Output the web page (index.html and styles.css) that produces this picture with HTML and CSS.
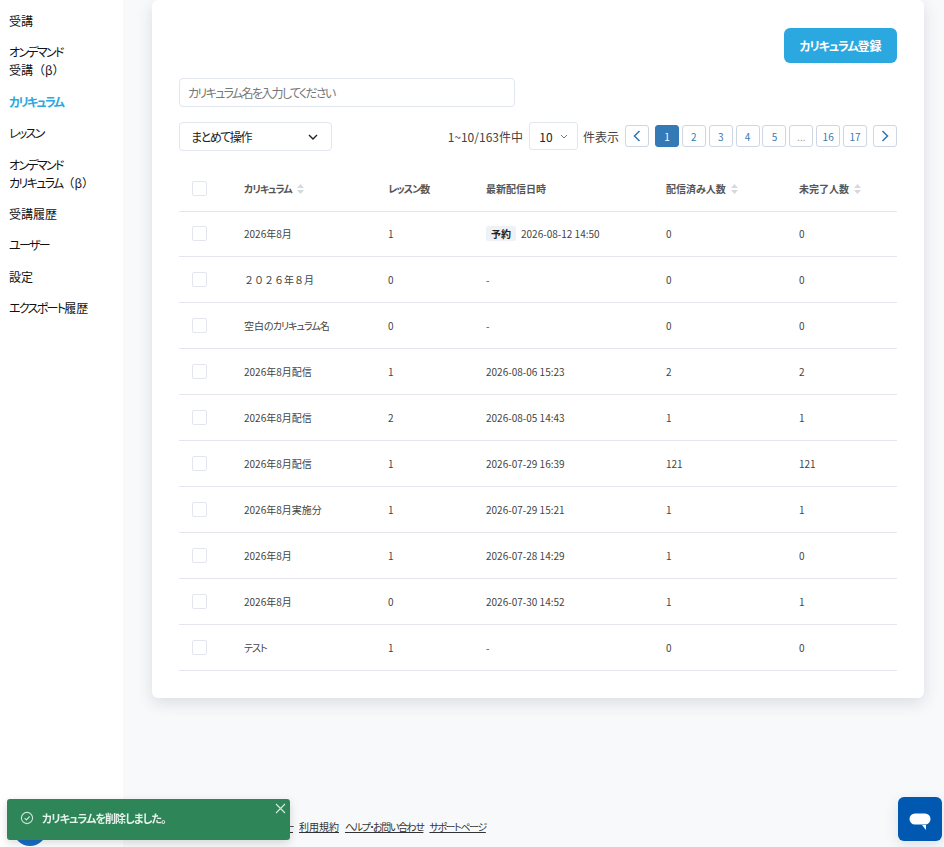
FILE: index.html
```html
<!DOCTYPE html>
<html lang="ja">
<head>
<meta charset="utf-8">
<title>カリキュラム</title>
<link rel="stylesheet" href="styles.css">
</head>
<body>
<div class="app">
  <nav class="sidebar">
    <a class="nav-item">受講</a>
    <a class="nav-item"><span class="k">オンデマンド</span><br>受講<span class="full">（β）</span></a>
    <a class="nav-item active"><span class="k">カリキュラム</span></a>
    <a class="nav-item"><span class="k">レッスン</span></a>
    <a class="nav-item"><span class="k">オンデマンド</span><br><span class="k">カリキュラム</span><span class="full">（β）</span></a>
    <a class="nav-item">受講履歴</a>
    <a class="nav-item"><span class="k">ユーザー</span></a>
    <a class="nav-item">設定</a>
    <a class="nav-item"><span class="k">エクスポート</span>履歴</a>
  </nav>
  <main class="main">
    <section class="card">
      <div class="top-row"><button class="primary-btn"><span class="k">カリキュラム</span>登録</button></div>
      <div class="search-box">カリキュラム名を入力してください</div>
      <div class="tools">
        <div class="bulk-select"><span class="bulk-label">まとめて操作</span>
          <svg class="chev" width="10" height="6" viewBox="0 0 10 6"><path d="M1 1l4 4 4-4" fill="none" stroke="#222" stroke-width="1.4"/></svg>
        </div>
        <div class="paging">
          <span class="count">1~10/163件中</span>
          <div class="size-select"><span>10</span>
            <svg width="8" height="5" viewBox="0 0 8 5"><path d="M1 1l3 3 3-3" fill="none" stroke="#777" stroke-width="1"/></svg>
          </div>
          <span class="count">件表示</span>
          <a class="page nav-page"><svg width="8" height="12" viewBox="0 0 8 12"><path d="M6.5 1L1.5 6l5 5" fill="none" stroke="#337ab7" stroke-width="1.6"/></svg></a>
          <div class="pages">
            <a class="page current">1</a><a class="page">2</a><a class="page">3</a><a class="page">4</a><a class="page">5</a><a class="page muted">...</a><a class="page">16</a><a class="page">17</a>
          </div>
          <a class="page nav-page"><svg width="8" height="12" viewBox="0 0 8 12"><path d="M1.5 1l5 5-5 5" fill="none" stroke="#337ab7" stroke-width="1.6"/></svg></a>
        </div>
      </div>
      <table class="table">
        <colgroup><col class="c1"><col class="c2"><col class="c3"><col class="c4"><col class="c5"><col class="c6"></colgroup>
        <thead>
          <tr>
            <th class="check"><span class="box"></span></th>
            <th><span class="k">カリキュラム</span><svg class="sort" width="7" height="12" viewBox="0 0 7 12"><path d="M3.5 1L7 5H0zM3.5 11L0 7h7z" fill="#d5d8dd"/></svg></th>
            <th><span class="k">レッスン</span>数</th>
            <th>最新配信日時</th>
            <th>配信済み人数<svg class="sort" width="7" height="12" viewBox="0 0 7 12"><path d="M3.5 1L7 5H0zM3.5 11L0 7h7z" fill="#d5d8dd"/></svg></th>
            <th>未完了人数<svg class="sort" width="7" height="12" viewBox="0 0 7 12"><path d="M3.5 1L7 5H0zM3.5 11L0 7h7z" fill="#d5d8dd"/></svg></th>
          </tr>
        </thead>
        <tbody>
          <tr><td class="check"><span class="box"></span></td><td>2026年8月</td><td>1</td><td><span class="tag">予約</span>2026-08-12 14:50</td><td>0</td><td>0</td></tr>
          <tr><td class="check"><span class="box"></span></td><td class="full">２０２６年８月</td><td>0</td><td>-</td><td>0</td><td>0</td></tr>
          <tr><td class="check"><span class="box"></span></td><td>空白<span class="k">のカリキュラム</span>名</td><td>0</td><td>-</td><td>0</td><td>0</td></tr>
          <tr><td class="check"><span class="box"></span></td><td>2026年8月配信</td><td>1</td><td>2026-08-06 15:23</td><td>2</td><td>2</td></tr>
          <tr><td class="check"><span class="box"></span></td><td>2026年8月配信</td><td>2</td><td>2026-08-05 14:43</td><td>1</td><td>1</td></tr>
          <tr><td class="check"><span class="box"></span></td><td>2026年8月配信</td><td>1</td><td>2026-07-29 16:39</td><td>121</td><td>121</td></tr>
          <tr><td class="check"><span class="box"></span></td><td>2026年8月実施分</td><td>1</td><td>2026-07-29 15:21</td><td>1</td><td>1</td></tr>
          <tr><td class="check"><span class="box"></span></td><td>2026年8月</td><td>1</td><td>2026-07-28 14:29</td><td>1</td><td>0</td></tr>
          <tr><td class="check"><span class="box"></span></td><td>2026年8月</td><td>0</td><td>2026-07-30 14:52</td><td>1</td><td>1</td></tr>
          <tr><td class="check"><span class="box"></span></td><td><span class="k">テスト</span></td><td>1</td><td>-</td><td>0</td><td>0</td></tr>
        </tbody>
      </table>
    </section>
    <footer class="footer">
      <a>プライバシーポリシー</a><a class="plain">利用規約</a><a>ヘルプ・お問い合わせ</a><a>サポートページ</a>
    </footer>
  </main>
</div>
<div class="avatar"></div>
<div class="toast">
  <svg class="toast-icon" width="14" height="14" viewBox="0 0 14 14"><circle cx="7" cy="7" r="5.6" fill="none" stroke="#cfe6da" stroke-width="1.1"/><path d="M4.6 7.1l1.8 1.8 3.2-3.4" fill="none" stroke="#cfe6da" stroke-width="1.1"/></svg>
  <span class="toast-text">カリキュラムを削除しました。</span>
  <svg class="toast-close" width="11" height="11" viewBox="0 0 11 11"><path d="M1 1l9 9M10 1l-9 9" stroke="#d5e8de" stroke-width="1.2"/></svg>
</div>
<div class="chat">
  <svg width="22" height="17" viewBox="0 0 22 17"><rect x="0.5" y="0.5" width="21" height="11" rx="5.5" fill="#fff"/><path d="M13 12h4v5z" fill="#fff"/></svg>
</div>
</body>
</html>
```
FILE: styles.css
```css
* { box-sizing: border-box; }
html, body { margin: 0; height: 100%; overflow: hidden; }
body {
  font-family: "Noto Sans CJK JP", "Noto Sans", sans-serif;
  font-feature-settings: "palt";
  font-size: 12px;
  color: #222;
  background: #f8f9fb;
}
.k { letter-spacing: -.14em; }
.full { font-feature-settings: normal; }
.app { display: flex; height: 847px; }
.sidebar {
  width: 123px;
  flex: none;
  background: #fff;
  display: flex;
  flex-direction: column;
  gap: 13.4px;
  padding: 12px 0 0 9px;
}
.nav-item { line-height: 18px; color: #111; }
.nav-item.active { color: #2ca8e0; font-weight: 700; }
.main {
  flex: 1;
  display: flex;
  flex-direction: column;
  padding: 0 20px 0 29px;
}
.card {
  height: 698px;
  background: #fff;
  border-radius: 6px;
  box-shadow: 0 5px 16px rgba(40, 50, 70, .14);
  padding: 28px 27px 0;
}
.top-row { display: flex; justify-content: flex-end; height: 50px; }
.primary-btn {
  width: 113px;
  height: 35px;
  border: 0;
  border-radius: 6px;
  background: #2ca8e0;
  color: #fff;
  font: inherit;
  font-weight: 700;
  font-feature-settings: "palt";
}
.primary-btn .k { letter-spacing: -.085em; }
.search-box {
  width: 336px;
  height: 29px;
  border: 1px solid #e2e6ee;
  border-radius: 4px;
  padding: 0 8px;
  line-height: 27px;
  color: #777;
  letter-spacing: -.14em;
}
.tools {
  display: flex;
  justify-content: space-between;
  align-items: flex-start;
  margin-top: 15px;
}
.bulk-select {
  width: 153px;
  height: 29px;
  border: 1px solid #e2e6ee;
  border-radius: 4px;
  padding: 0 13px 0 11px;
  display: flex;
  align-items: center;
  justify-content: space-between;
}
.bulk-label { letter-spacing: -.12em; }
.paging { display: flex; align-items: center; }
.count { color: #444; }
.size-select {
  width: 49px;
  height: 28px;
  margin: 0 5px 0 6px;
  border: 1px solid #e2e6ee;
  border-radius: 3px;
  display: flex;
  align-items: center;
  justify-content: center;
  gap: 7px;
}
.pages { display: flex; gap: 2.86px; margin: 0 6px; }
.page {
  width: 24px;
  height: 22px;
  border: 1px solid #cdd6e2;
  border-radius: 3px;
  font-size: 10px;
  color: #337ab7;
  display: flex;
  align-items: center;
  justify-content: center;
}
.paging > .count:nth-of-type(2) { margin-right: 6px; }
.page.current { background: #337ab7; border-color: #337ab7; color: #fff; }
.page.muted { color: #999; }
.table {
  width: 718px;
  table-layout: fixed;
  border-collapse: collapse;
  margin-top: 14px;
}
.table .k { letter-spacing: -.1em; }
.c1 { width: 65px; }
.c2 { width: 144px; }
.c3 { width: 98px; }
.c4 { width: 180px; }
.c5 { width: 133px; }
.c6 { width: 98px; }
th, td {
  padding: 0;
  text-align: left;
  font-size: 10px;
  border-bottom: 1px solid #e3e6ee;
  vertical-align: middle;
}
th { height: 46px; padding-top: 2px; font-weight: 700; color: #555; }
td { height: 45.95px; color: #444; }
.check { padding-left: 13px; }
.box {
  display: block;
  width: 15px;
  height: 15px;
  border: 1px solid #e3e6ee;
  border-radius: 2px;
}
.sort { margin-left: 5px; vertical-align: -2px; }
.tag {
  display: inline-block;
  height: 15px;
  line-height: 15px;
  padding: 0 5px;
  margin-right: 5px;
  background: #eef1f6;
  border-radius: 2px;
  font-weight: 700;
  color: #222;
}
.footer {
  margin-top: 121px;
  padding-left: 63px;
  display: flex;
  gap: 6px;
  font-size: 10px;
  color: #333;
  letter-spacing: -.14em;
}
.footer a { text-decoration: underline; }
.footer .plain { letter-spacing: 0; }
.avatar {
  position: fixed;
  left: 13px;
  top: 812px;
  width: 34px;
  height: 34px;
  border-radius: 50%;
  background: #1a6fc4;
}
.toast {
  position: fixed;
  left: 7px;
  top: 799px;
  width: 283px;
  height: 41px;
  background: #2e8558;
  border-radius: 3px;
  box-shadow: 0 3px 10px rgba(0, 0, 0, .15);
  color: #e6f2ec;
  display: flex;
  align-items: center;
  padding: 0 0 4px 13px;
  font-size: 11px;
  font-weight: 700;
}
.toast-text { margin-left: 8px; letter-spacing: -.085em; }
.toast-close { position: absolute; right: 4px; top: 4px; }
.chat {
  position: fixed;
  left: 898px;
  top: 797px;
  width: 44px;
  height: 44px;
  border-radius: 6px;
  background: #0058b0;
  box-shadow: 0 4px 14px rgba(0, 60, 100, .12);
  display: flex;
  align-items: center;
  justify-content: center;
  padding-top: 5px;
}
```
